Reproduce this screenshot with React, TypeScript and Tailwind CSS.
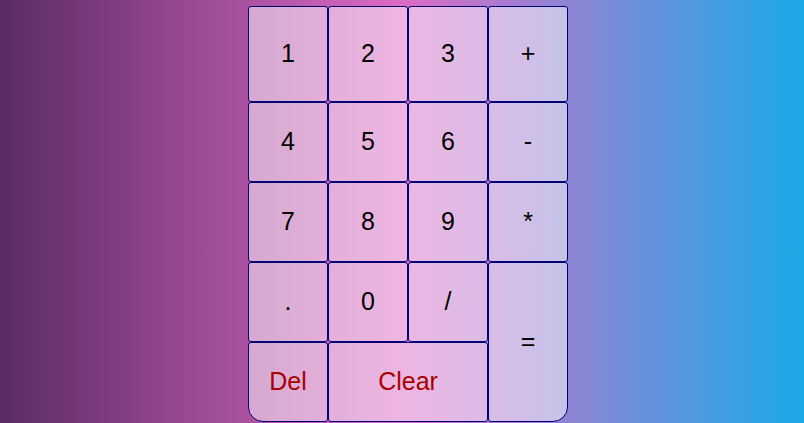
import React from "react";

export default function App() {
  const base =
    "flex items-center justify-center border border-[#000078] rounded-[3px] bg-white/50 text-black";
  return (
    <div
      className="w-[804px] h-[423px] overflow-hidden flex justify-center items-start pl-[12px] bg-[linear-gradient(to_right,#5a2b66,#dd6bc5,#1aa9e8)]"
      style={{ fontFamily: '"Liberation Sans", Arial, sans-serif' }}
    >
      <div className="mt-[6px] w-[320px] grid grid-cols-[repeat(4,80px)] grid-rows-[96px_80px_80px_80px_80px] text-[25px]">
        <button className={base}>1</button>
        <button className={base}>2</button>
        <button className={base}>3</button>
        <button className={base}>+</button>
        <button className={base}>4</button>
        <button className={base}>5</button>
        <button className={base}>6</button>
        <button className={base}>-</button>
        <button className={base}>7</button>
        <button className={base}>8</button>
        <button className={base}>9</button>
        <button className={base}>*</button>
        <button className={base}>.</button>
        <button className={base}>0</button>
        <button className={base}>/</button>
        <button className={`${base} row-span-2 rounded-br-[15px]`}>=</button>
        <button className={`${base} rounded-bl-[15px] !text-[#a80000]`}>Del</button>
        <button className={`${base} col-span-2 !text-[#a80000]`}>Clear</button>
      </div>
    </div>
  );
}
